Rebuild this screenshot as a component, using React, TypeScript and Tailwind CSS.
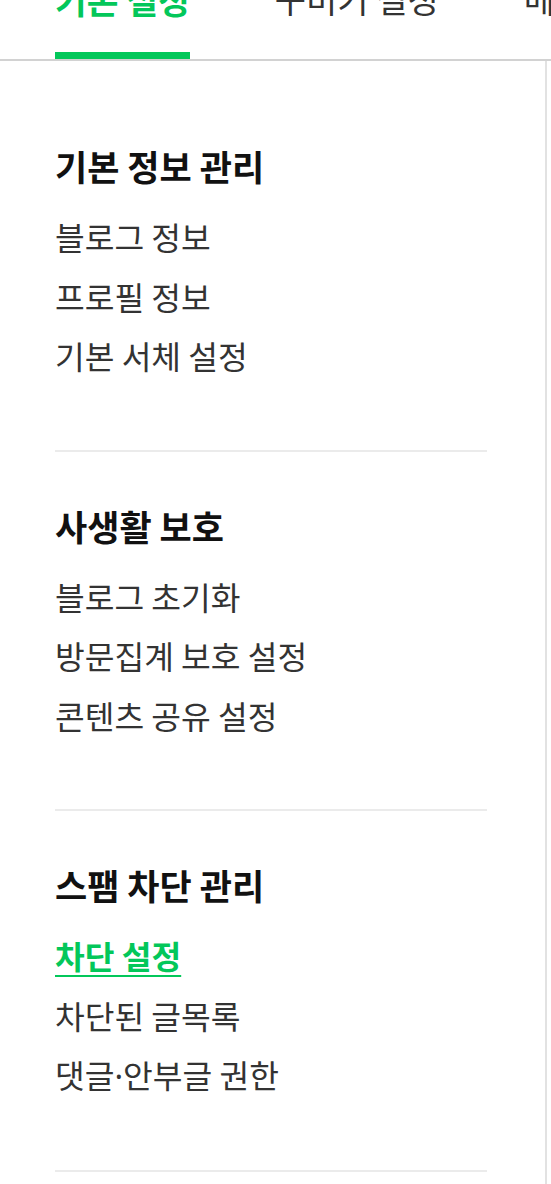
import React from "react";

const sections = [
  { title: "기본 정보 관리", items: ["블로그 정보", "프로필 정보", "기본 서체 설정"] },
  { title: "사생활 보호", items: ["블로그 초기화", "방문집계 보호 설정", "콘텐츠 공유 설정"] },
  { title: "스팸 차단 관리", items: ["차단 설정", "차단된 글목록", "댓글·안부글 권한"], active: 0 },
];

function renderText(t: string) {
  if (!t.includes("·")) return t;
  const [a, b] = t.split("·");
  return (
    <>
      {a}
      <span style={{ fontFamily: '"Noto Sans", sans-serif' }}>·</span>
      {b}
    </>
  );
}

export default function App() {
  return (
    <div
      className="w-[551px] h-[1184px] overflow-hidden bg-white"
      style={{ fontFamily: '"Noto Sans CJK KR", "Noto Sans", sans-serif' }}
    >
      <div className="border-b-2 border-[#d2d2d2] overflow-hidden">
        <div className="flex gap-[85px] pl-[55px] -mt-[23px] whitespace-nowrap">
          <div className="flex flex-col shrink-0">
            <span className="text-[34.5px] leading-[44px] font-bold text-[#03c75a]">기본 설정</span>
            <div className="mt-[31px] h-[7px] bg-[#03c75a]" />
          </div>
          <div className="flex flex-col shrink-0">
            <span className="text-[34px] leading-[44px] text-[#333]">꾸미기 설정</span>
          </div>
          <div className="flex flex-col shrink-0">
            <span className="text-[34px] leading-[44px] text-[#333]">메뉴·글·동영상 관리</span>
          </div>
        </div>
      </div>
      <div className="w-[547px] h-full border-r-2 border-[#e2e2e2] pt-[31px]">
        {sections.map((s, si) => (
          <div key={si} className="ml-[55px] w-[432px] pt-[52px] pb-[64px] border-b-2 border-[#ebebeb]">
            <h2 className="text-[35px] leading-[44px] font-bold text-[#111]">{s.title}</h2>
            <ul className="mt-[19px]">
              {s.items.map((it, ii) => (
                <li key={ii} className="text-[32.3px] leading-[59.5px] text-[#333]">
                  {s.active === ii ? (
                    <span className="font-bold text-[#03c75a] underline decoration-2 underline-offset-[6px]">{it}</span>
                  ) : (
                    renderText(it)
                  )}
                </li>
              ))}
            </ul>
          </div>
        ))}
      </div>
    </div>
  );
}
